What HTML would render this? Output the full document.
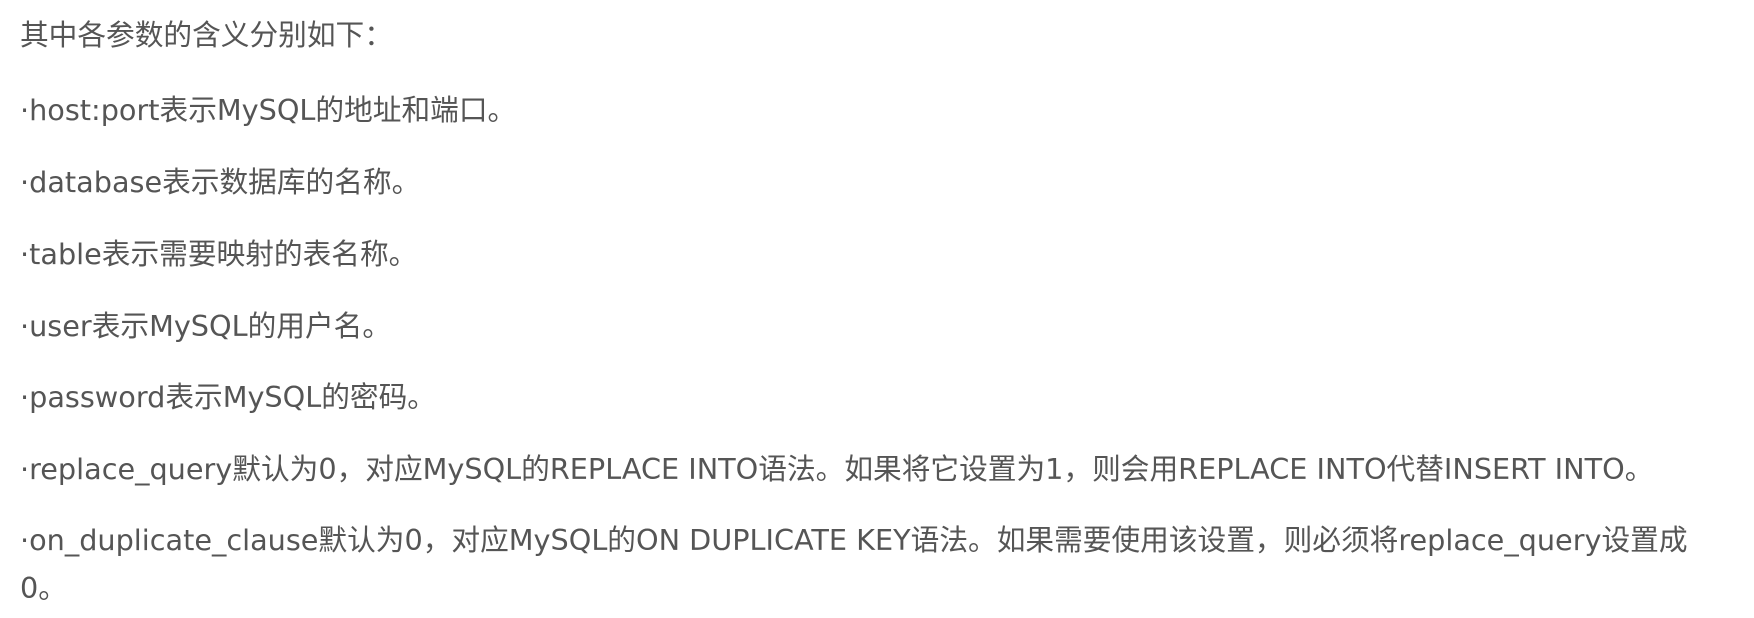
<!DOCTYPE html>
<html><head><meta charset="utf-8"><style>
html,body{margin:0;padding:0;background:#fff;width:1754px;height:618px;overflow:hidden}
.l{position:absolute;left:20px;font-family:"DejaVu Sans","Noto Sans CJK SC",sans-serif;font-size:28.7px;line-height:52px;color:#555;white-space:nowrap}
</style></head><body>
<div class="l" style="top:9px">其中各参数的含义分别如下：</div>
<div class="l" style="top:84px">·host:port表示MySQL的地址和端口。</div>
<div class="l" style="top:156px">·database表示数据库的名称。</div>
<div class="l" style="top:228px">·table表示需要映射的表名称。</div>
<div class="l" style="top:300px">·user表示MySQL的用户名。</div>
<div class="l" style="top:371px">·password表示MySQL的密码。</div>
<div class="l" style="top:443px">·replace_query默认为0，对应MySQL的REPLACE INTO语法。如果将它设置为1，则会用REPLACE INTO代替INSERT INTO。</div>
<div class="l" style="top:514px">·on_duplicate_clause默认为0，对应MySQL的ON DUPLICATE KEY语法。如果需要使用该设置，则必须将replace_query设置成</div>
<div class="l" style="top:562px">0。</div>
</body></html>
